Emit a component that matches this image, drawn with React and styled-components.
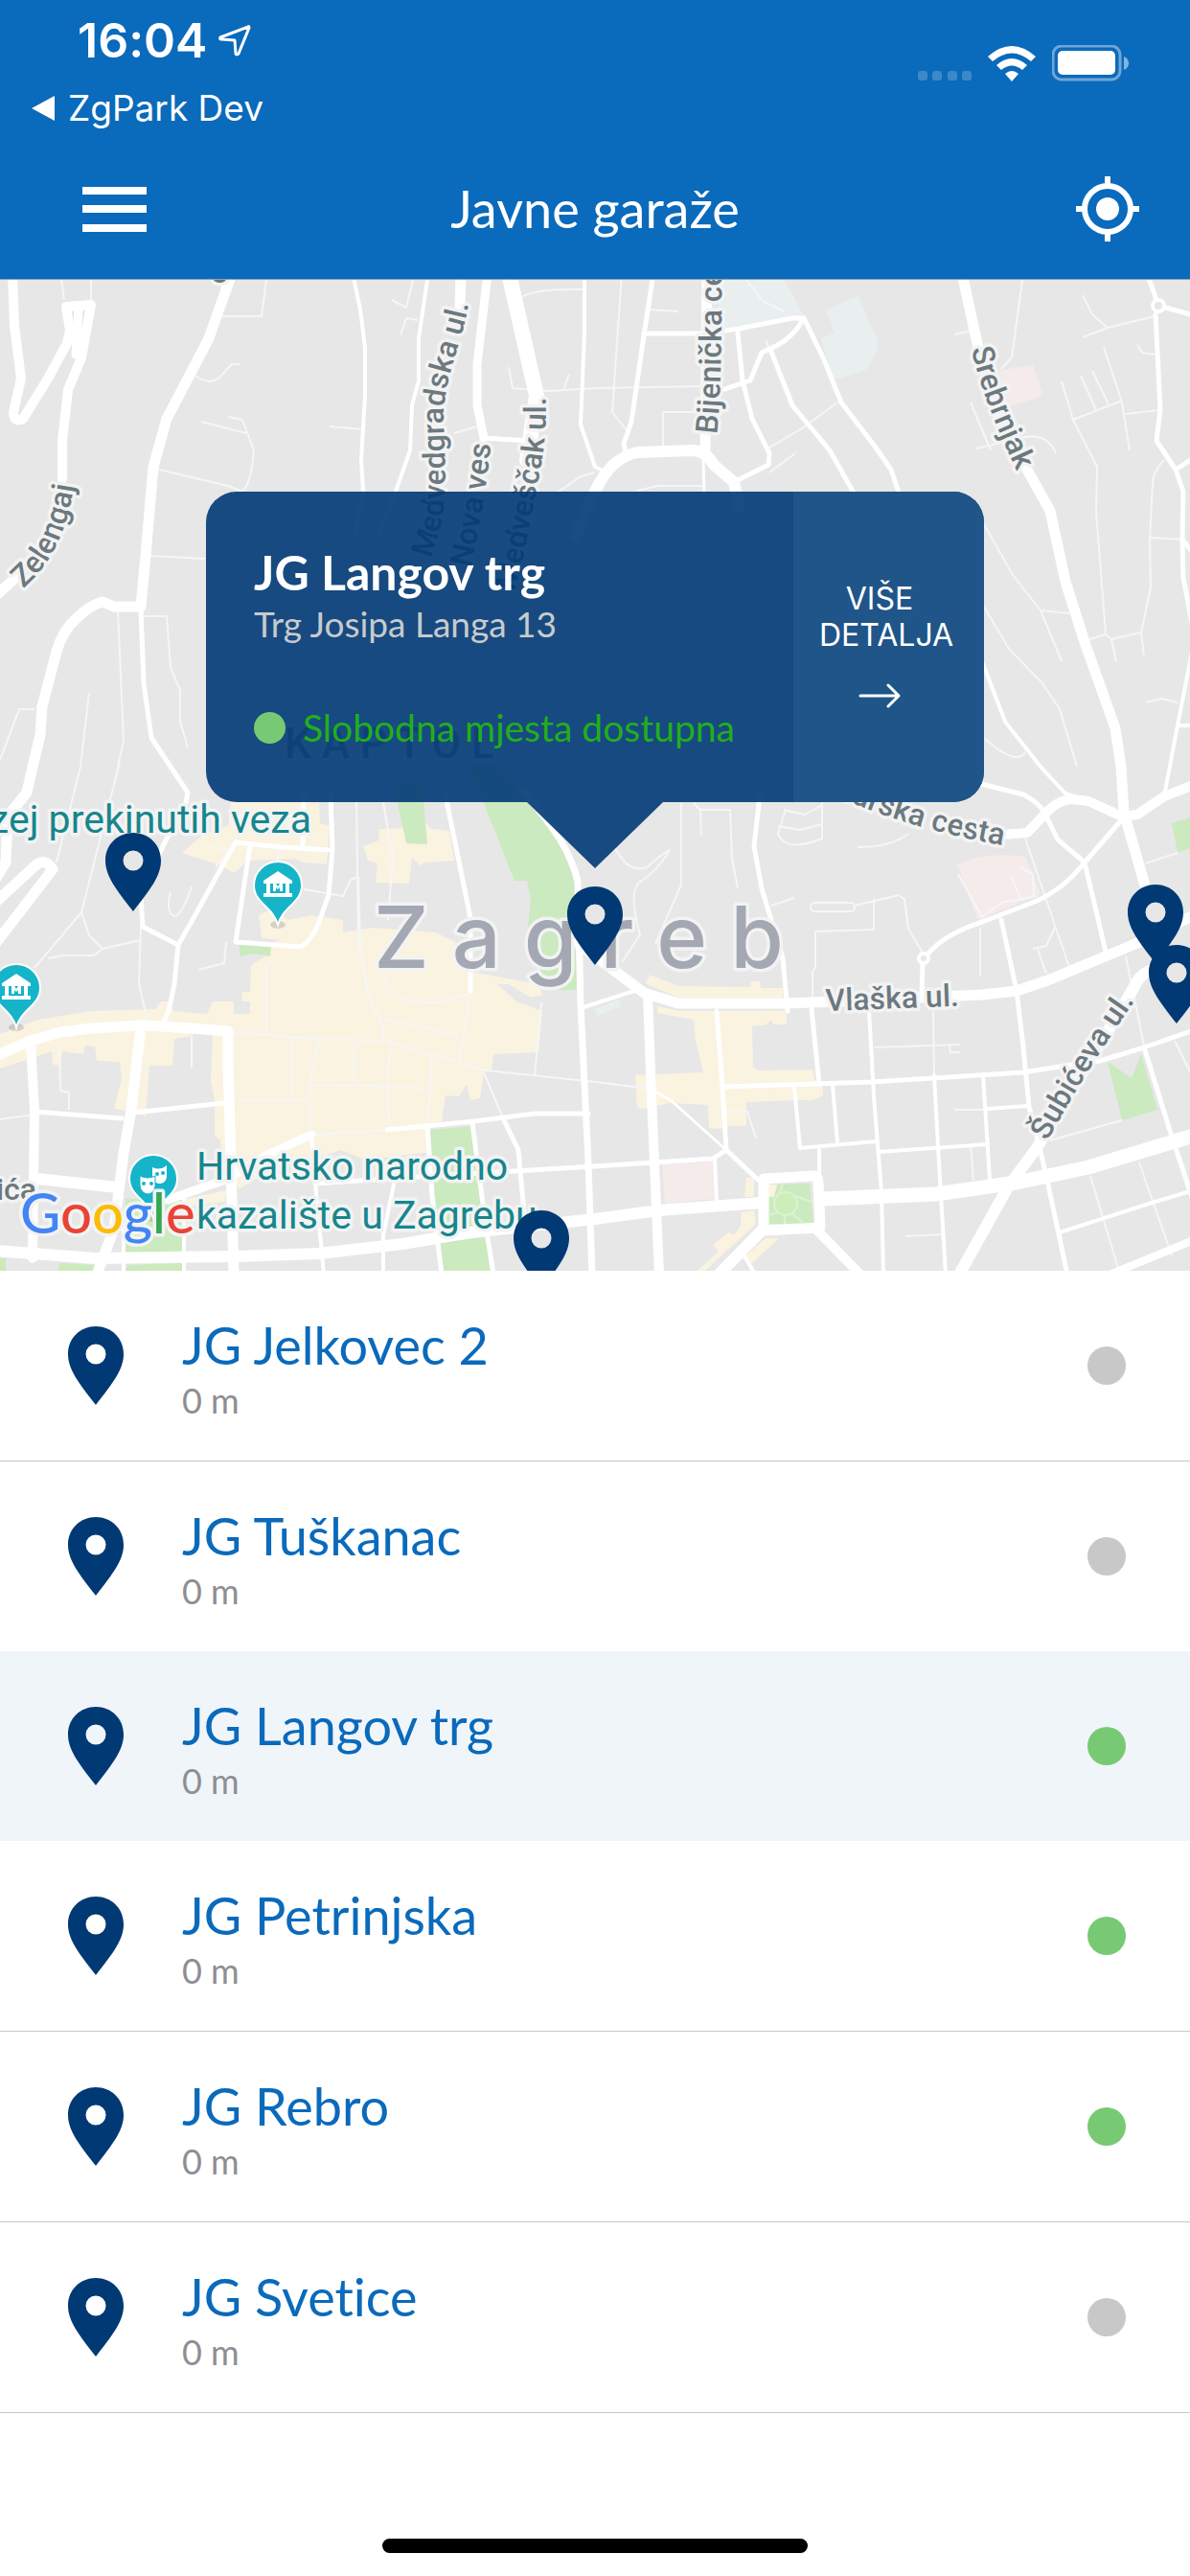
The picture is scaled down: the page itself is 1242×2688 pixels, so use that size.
import React, { useState } from 'react'
import styled, { createGlobalStyle } from 'styled-components'

const GlobalStyle = createGlobalStyle`
  *{
    box-sizing:border-box;
  }
  body{
    margin:0;
    background:#fff;
    font-family:Lato, "Open Sans", sans-serif;
    font-variant-ligatures:none;
  }
  button{
    padding:0;
    border:0;
    background:none;
    color:inherit;
    font:inherit;
    cursor:pointer;
  }
  svg{
    display:block;
  }
`

const Page = styled.div`
  display:flex;
  flex-direction:column;
  height:100vh;
  overflow:hidden;
`

const Header = styled.header`
  flex:none;
  background:#0a6abb;
  color:white;
  border-bottom:1px solid #8aa3b8;
`

const StatusBar = styled.div`
  display:flex;
  justify-content:space-between;
  align-items:flex-start;
  padding:12px 63px 10px 33px;
  font-family:Inter, "Liberation Sans", sans-serif;
`

const Clock = styled.div`
  display:flex;
  align-items:center;
  gap:12px;
  padding-left:48px;
  font-size:50px;
  font-weight:600;
  line-height:60px;
`

const BackLink = styled.a`
  display:flex;
  align-items:center;
  gap:14px;
  margin-top:19px;
  color:white;
  font-size:37px;
  line-height:44px;
  text-decoration:none;
`

const Indicators = styled.div`
  display:flex;
  align-items:flex-end;
  gap:17px;
  padding-top:35px;
`

const NavBar = styled.div`
  display:grid;
  grid-template-columns:1fr auto 1fr;
  align-items:center;
  height:146px;
`

const MenuButton = styled.button`
  && {
    justify-self:start;
    margin-left:86px;
  }
`

const LocateButton = styled.button`
  && {
    justify-self:end;
    margin-right:52px;
  }
`

const Title = styled.h1`
  margin:0;
  font-size:54px;
  font-weight:400;
  line-height:64px;
`

const MapArea = styled.section`
  position:relative;
  flex:none;
  height:1034px;
  overflow:hidden;
  background:#e7e7e7;
`

const MapSvg = styled.svg`
  width:100%;
  height:100%;
  .road{
    fill:none;
    stroke:white;
    stroke-linejoin:round;
    stroke-linecap:round;
  }
  .lane{
    fill:none;
    stroke:#f6f6f6;
    stroke-width:2;
    stroke-linejoin:round;
  }
  .shop{
    fill:#faf3e0;
  }
  .park{
    fill:#cbeabf;
  }
  .clinic{
    fill:#f5ebeb;
  }
  .campus{
    fill:#e9eeef;
  }
  text{
    font-family:Roboto, "Liberation Sans", sans-serif;
    paint-order:stroke;
    stroke:#f3f3f3;
    stroke-width:7px;
    stroke-linejoin:round;
  }
  .street{
    font-size:32px;
    font-weight:500;
    fill:#6c797f;
  }
  .place{
    font-size:41px;
    fill:#17868d;
  }
  .district{
    font-size:44px;
    font-weight:500;
    fill:#8d929c;
  }
  .city{
    font-family:Inter, Roboto, sans-serif;
    font-size:90px;
    font-weight:500;
    fill:#a3a8b3;
  }
  .google{
    font-family:Lato, sans-serif;
    font-size:58px;
    font-weight:500;
  }
`

// pins hang off the horizontal centre so that they stay on the drawn streets
const MapPin = styled.button`
  position:absolute;
  top:${(p) => p.$y}px;
  left:calc(50% + ${(p) => p.$x}px);
`

const Popup = styled.article`
  position:absolute;
  top:221px;
  left:50%;
  display:flex;
  width:812px;
  height:324px;
  transform:translateX(-50%);
  border-radius:32px;
  background:rgba(0, 57, 116, 0.9);
  color:white;
  &::after{
    content:"";
    position:absolute;
    top:100%;
    left:50%;
    width:142px;
    height:69px;
    transform:translateX(-50%);
    background:rgba(0, 57, 116, 0.9);
    clip-path:polygon(0 0, 100% 0, 50% 100%);
  }
`

const PopupBody = styled.div`
  flex:1;
  padding:56px 0 0 50px;
  h2{
    margin:0;
    font-size:50px;
    font-weight:700;
    line-height:56px;
  }
  p{
    margin:0;
    color:#c8cacc;
    font-size:37px;
    line-height:52px;
  }
`

const Availability = styled.div`
  display:flex;
  align-items:center;
  gap:18px;
  margin-top:56px;
  color:#22ae1c;
  font-size:39px;
  line-height:52px;
  white-space:nowrap;
`

const Dot = styled.span`
  flex:none;
  width:${(p) => p.$size}px;
  height:${(p) => p.$size}px;
  border-radius:50%;
  background:${(p) => (p.$free ? '#78c974' : '#c8c8c8')};
`

const DetailsButton = styled.button`
  && {
    display:flex;
    flex-direction:column;
    align-items:center;
    justify-content:center;
    gap:31px;
    width:199px;
    padding:0 46px 6px 27px;
    border-radius:0 32px 32px 0;
    background:#1f5588;
    font-family:Inter, "Liberation Sans", sans-serif;
    font-size:32px;
    font-weight:400;
    line-height:38px;
    span{
      width:100%;
    }
  }
`

const List = styled.ul`
  flex:1 1 0;
  min-height:0;
  margin:0;
  padding:0;
  overflow:hidden;
  list-style:none;
`

const Row = styled.li`
  border-bottom:${(p) => (p.$line ? '1px solid #c6c7c9' : '0')};
  background:${(p) => (p.$active ? '#f0f5fa' : 'white')};
  button{
    display:flex;
    align-items:center;
    width:100%;
    height:198px;
    padding:0 67px 0 70px;
    text-align:left;
  }
`

const RowText = styled.span`
  flex:1;
  display:flex;
  flex-direction:column;
  padding:4px 0 0 60px;
`

const Name = styled.span`
  color:#0a6abb;
  font-size:54px;
  line-height:68px;
`

const Distance = styled.span`
  color:#8e8e93;
  font-size:36px;
  line-height:46px;
`

const HomeArea = styled.footer`
  flex:none;
  display:flex;
  justify-content:center;
  padding:74px 0 24px;
  background:white;
  span{
    width:444px;
    height:15px;
    border-radius:8px;
    background:black;
  }
`

const garages = [
  { name: 'JG Jelkovec 2', free: false },
  { name: 'JG Tuškanac', free: false },
  { name: 'JG Langov trg', free: true },
  { name: 'JG Petrinjska', free: true },
  { name: 'JG Rebro', free: true },
  { name: 'JG Svetice', free: false },
  { name: 'JG Botinec', free: false },
]

const pins = [
  { x: -512, y: 577, label: 'JG Tuškanac' },
  { x: -30, y: 633, label: 'JG Langov trg' },
  { x: 555, y: 631, label: 'JG Rebro' },
  { x: 577, y: 694, label: 'JG Svetice' },
  { x: -86, y: 971, label: 'JG Petrinjska' },
]

const roads = [
  [10, 'M13 285L15 340L22 395L14 430Q14 442 24 437L50 395L70 358L73 345L69 320L95 318L85 373L71 407L65 460L65 500'],
  [9, 'M82 322L79 370'],
  [11, 'M22 598L-5 622'],
  [11, 'M242 285L218 353L174 437L160 487L152 580L147 633L119 633L107 628Q93 632 80 645Q65 658 59 680L44 737L42 767L34 800L28 827L8 852L6 900L-5 918'],
  [11, 'M-5 942L36 904Q46 894 55 907L-5 985'],
  [5, 'M147 637L150 713L158 770L178 800L196 827L194 838L170 883L147 936L149 967L186 986'],
  [5, 'M246 879L234 900L202 958L186 986L182 1027L176 1055L170 1068'],
  [4, 'M368 285L376 323L381 363L381 413L377 480L379 513L370 560'],
  [4, 'M447 285L437 353L437 397L430 423L428 470L414 510L395 560'],
  [11, 'M481 285L480 320'],
  [9, 'M509 285L498 380L498 423L505 457'],
  [16, 'M531 285L560 413L550 480'],
  [5, 'M505 457L554 460'],
  [4, 'M610 285L610 347L606 443L621 487L633 493'],
  [11, 'M-5 1102L32 1086L63 1077L95 1073L147 1070L170 1071L238 1076L238 1110L240 1179L244 1330'],
  [10, 'M32 1089L36 1158L34 1313'],
  [11, 'M147 1072L137 1158L129 1203L123 1251L119 1282L101 1330'],
  [5, 'M36 1160L127 1167'],
  [5, 'M139 1161L234 1151'],
  [12, 'M38 1230L123 1239'],
  [12, 'M-5 1305L99 1313L246 1311L333 1308L420 1298L491 1286L621 1272L688 1263L795 1255'],
  [9, 'M175 1252L238 1230L277 1206L325 1184'],
  [4, 'M325 1184L329 1234L338 1330'],
  [4, 'M192 1250L192 1330'],
  [4, 'M129 1280L129 1330'],
  [5, 'M404 1179L495 1170L558 1162L614 1162'],
  [5, 'M446 1175L451 1248L461 1330'],
  [5, 'M493 1172L507 1279L515 1330'],
  [5, 'M525 1167L541 1200L547 1265'],
  [5, 'M329 1235L451 1227L621 1217L744 1209L758 1200'],
  [4, 'M412 1231L400 1289L400 1330'],
  [5, 'M465 830L491 958L491 1034'],
  [7, 'M545 825Q595 880 603 920L606 1048L614 1213L618 1330'],
  [5, 'M345 830L347 886L343 934L333 962Q324 984 313 988L246 983L261 881'],
  [5, 'M246 879L293 884L345 887'],
  [5, 'M317 830L316 883'],
  [5, 'M682 285L672 350L659 440L651 463L653 472'],
  [11, 'M738 285L736 472'],
  [12, 'M600 560L621 513Q637 478 665 472L724 470Q738 472 745 485L766 503L772 530'],
  [5, 'M672 348L736 348L771 343L827 332L839 332L859 373L878 420L914 467L930 490L940 520'],
  [5, 'M839 332Q828 352 810 361L795 368L783 397L736 413'],
  [5, 'M770 347L775 397L785 437L803 473L802 485L766 503'],
  [5, 'M805 367L827 423L866 470L892 516'],
  [3, 'M734 480L735 516'],
  [11, 'M1004 285L1021 363L1040 430L1072 490L1096 533L1112 607L1132 670L1164 760L1170 800L1173 848L1195 924'],
  [5, 'M1197 285L1207 313'],
  [5, 'M1213 320L1246 329'],
  [5, 'M1206 328L1211 427L1207 460L1227 490L1235 513L1234 563L1235 603L1246 660'],
  [5, 'M1227 490L1246 478'],
  [5, 'M1234 563L1246 578'],
  [4, 'M1025 690L1049 753L1086 800L1112 828L1136 836'],
  [4, 'M1246 670L1229 757L1215 831'],
  [4, 'M1229 757L1246 757'],
  [11, 'M600 982L672 1036L708 1047L819 1047L898 1044L1025 1038L1061 1034L1096 1022L1187 984L1246 955'],
  [10, 'M676 1038L680 1144L688 1330'],
  [4, 'M606 1052L668 1032'],
  [5, 'M793 830L787 883L795 927L817 1000L822 1055'],
  [5, 'M748 1055L754 1134L758 1200L791 1231'],
  [5, 'M754 1134L910 1129L1068 1119L1112 1112L1148 1107L1191 1094L1246 1075'],
  [5, 'M847 1053L855 1131'],
  [4, 'M907 1055L912 1144L920 1244L922 1330'],
  [4, 'M975 1122L979 1196L987 1330'],
  [4, 'M829 1134L835 1198L914 1191'],
  [4, 'M869 1132L874 1193'],
  [4, 'M916 1202L1031 1194'],
  [4, 'M1026 1122L1033 1231'],
  [4, 'M1031 1157L1072 1154'],
  [5, 'M1045 960L1061 1034L1068 1093L1074 1155L1084 1193L1092 1227L1114 1330'],
  [15, 'M859 1251L977 1246L1061 1234L1136 1218L1246 1185'],
  [11, 'M797 1230L849 1227Q854 1228 854 1234L856 1281L797 1284Z'],
  [12, 'M795 1284L750 1330'],
  [4, 'M774 1306L786 1326'],
  [10, 'M853 1284L898 1330'],
  [4, 'M855 1200L855 1227'],
  [4, 'M746 1210L748 1255'],
  [3, 'M684 1139L700 1148L758 1200'],
  [12, 'M1203 1012Q1190 1015 1183 1031L1166 1060L1082 1198L1053 1237L1001 1330'],
  [10, 'M1045 871L1072 869L1092 848Q1105 834 1120 834L1136 836L1171 852L1187 850L1215 831L1246 819'],
  [5, 'M1020 817L1068 829Q1085 838 1090 848L1104 876L1132 900L1154 993'],
  [5, 'M1171 855L1132 900Q1110 928 1080 941L1025 962Q985 975 968 996'],
  [5, 'M963 1004L962 1038'],
  [5, 'M1195 1096L1223 1186L1246 1255'],
  [4, 'M1106 1286L1199 1256L1246 1242'],
  [8, 'M1158 1330L1246 1294'],
]

const lanes = [
  'M214 583L157 580', 'M166 490L238 507L253 513Q262 505 265 470L253 438L238 435', 'M210 440L257 452',
  'M204 392Q218 402 228 395L242 380L251 380', 'M230 330L273 330L279 285', 'M63 285L67 313', 'M95 285L95 313',
  'M543 310Q560 302 594 302L608 302', 'M531 383L535 405L574 408L621 405', 'M588 408L594 390', 'M344 445L378 448',
  'M409 313L424 321L431 292', 'M418 350L424 332L436 334', 'M123 637L129 773L123 800', 'M474 452L498 445', 'M583 513L606 497L621 493',
  'M150 643L174 643L178 697L188 720L188 753L196 780', 'M93 723L84 800L59 900', 'M0 793L20 740L36 740',
  'M125 795L85 952L36 1010', 'M85 952L93 976L107 990L147 981', 'M147 967L145 1027L154 1065', 'M50 1000L66 997L98 997L107 990',
  'M374 914L376 989L384 1038L400 1072L400 1086', 'M242 1077L329 1084L404 1086L507 1117L621 1129', 'M305 1082L305 1148',
  'M333 1084L323 1134L323 1182', 'M370 1086L370 1132', 'M323 1132L404 1133L449 1136', 'M408 1086L404 1134L407 1179',
  'M451 1100L447 1172', 'M242 1148L323 1148', 'M400 1063L481 1081', 'M491 1038L479 1107', 'M505 1119L525 1167', 'M325 1184L404 1179',
  'M491 1036Q455 1052 420 1043Q400 1030 396 1008', 'M278 1080L278 1006L288 1003', 'M565 1046L558 1123', 'M200 1080L200 1114',
  'M178 930Q172 955 184 956Q192 950 200 925', 'M207 1012L234 1005L236 983', 'M372 830L374 990', 'M400 837L410 895L405 960', 'M0 1168L36 1163', 'M62 1090L63 1138L72 1140L72 1158',
  'M317 928L358 935L366 918L374 915', 'M219 883L238 888L225 905', 'M290 884L290 925',
  'M803 467L837 447L874 420', 'M692 468L692 430L736 430', 'M621 405L736 403', 'M649 285L639 430L655 450', 'M665 512L686 507L734 507',
  'M678 323L708 325', 'M799 355L805 370', 'M803 493L830 473', 'M779 292L796 314L818 325',
  'M1068 285L1056 373L1045 385', 'M1130 308L1140 328L1156 342L1205 330', 'M1130 352L1156 342', 'M1013 420L1034 470',
  'M1108 398L1120 438L1145 487L1144 533L1154 662L1134 668', 'M1120 438L1171 418', 'M1152 362L1171 420L1179 470', 'M1175 432L1209 428',
  'M1215 480Q1203 492 1203 505L1200 563L1201 613L1191 660L1160 667L1154 662', 'M1200 561L1234 563', 'M1191 660L1194 684', 'M1160 667L1165 690',
  'M1128 392L1144 428', 'M1140 387L1157 422', 'M1187 360L1192 368L1206 370', 'M1027 547L1057 600L1086 637L1116 640', 'M1086 637L1108 690',
  'M1027 633L1053 677L1088 713L1106 740L1124 800', 'M1019 468L1065 457Q1092 450 1102 473', 'M997 349L1013 345', 'M1027 770Q1060 800 1070 785', 'M1196 733L1213 729L1229 733',
  'M912 938L912 970L851 972L851 1010L848 1014L848 1041', 'M892 945L938 934L944 938L948 969L964 996', 'M850 942H888Q892 942 892 947Q892 951 888 951H850Q846 951 846 947Q846 942 850 942Z',
  'M730 845L762 845L764 896L770 927', 'M724 838L731 845L732 872', 'M711 838L711 923L684 985', 'M641 883Q655 912 675 905Q705 880 697 890Q685 910 668 920Q655 930 668 975L650 1003',
  'M820 845L812 870Q820 890 858 875L858 837', 'M895 884Q930 884 948 870', 'M812 862L835 866L858 860', 'M818 845L840 850L858 840', 'M912 1093L1002 1090', 'M974 1055L975 1122', 'M1023 968L1023 1018',
  'M805 945L829 937', 'M1070 875L1118 1015', 'M1101 968L1092 987L1078 990', 'M1083 990L1092 1016', 'M1175 998L1195 1096', 'M1195 901L1229 890', 'M1096 1190L1171 1169', 'M1138 1227L1169 1330', 'M1189 1213L1223 1310',
  'M1013 1194L1016 1232', 'M945 1290L985 1288', 'M996 1158L1026 1158', 'M991 1090L992 1098L1002 1098', 'M758 1160L780 1160L789 1188', 'M1226 1086L1242 1118', 'M621 1129L678 1136', 'M1000 912L1025 957L1045 942L1082 935', 'M1055 915L1067 940', 'M1064 905L1078 912L1079 935',
]

const shops = [
  'M180 1055L216 1058L222 1045L244 1045L244 1058L261 1058L261 1045L252 1045L253 1035L261 1035L262 1007L277 998L283 984L291 981L273 979L270 955L285 948L300 960L325 955L358 960L358 973L388 968L455 973L475 983L491 1014L562 1027L566 1038L554 1041L531 1027L519 1027L539 1045L566 1055L562 1098L515 1100L513 1117L505 1118L501 1146L491 1148L487 1131L479 1144L465 1143L461 1170L448 1174L442 1203L380 1210L356 1200L325 1210L277 1224L249 1241L242 1224L234 1227L230 1190L224 1185L224 1148L220 1128L222 1079L182 1076Z',
  'M0 1079L40 1064L95 1055L162 1053L168 1045L177 1045L182 1058L200 1081L182 1084L180 1112L156 1112L152 1165L140 1160L119 1157L127 1126L125 1108L101 1107L99 1092L89 1091L87 1100L65 1097L63 1111L55 1111L54 1097L0 1115Z',
  'M190 890L214 869L238 862L241 837L333 837L334 859L344 862L341 902L317 900L309 896L259 898L244 911L230 903Z',
  'M379 883L395 877L396 865L424 864L446 860L450 865L469 867L474 898L444 900L438 903L430 895L427 922L392 921L394 901L384 898Z',
  'M404 1180L446 1175L446 1203L404 1203Z',
  'M186 1253L240 1241L234 1254L202 1258Z',
  'M678 1017L708 1029L783 1030L783 1024L793 1024L794 1031L817 1031L817 1041L708 1041L674 1026Z',
  'M686 1050L710 1055L821 1055L821 1069L807 1069L805 1064L800 1069L785 1071L786 1113L792 1117L849 1116L850 1127L859 1134L859 1143L849 1148L831 1148L779 1150L779 1175L760 1175L752 1178L740 1177L739 1153L698 1151L672 1157L665 1156L663 1122L734 1119L726 1086L724 1064L686 1057Z',
  'M779 1229L787 1229L787 1249L777 1249Z',
  'M773 1265L787 1263L789 1277L736 1326L728 1326L750 1306L744 1299L760 1286L766 1289L773 1279Z',
  'M813 1292L783 1320L775 1313L799 1292Z',
]

const parks = [
  'M410 815L440 815L446 881L424 880Z',
  'M490 800L520 800L550 836L586 883L602 927L594 945L606 1033L566 1033L564 1010L549 988L554 938L550 919L537 919Z',
  'M250 986L283 988L282 998L265 995L250 998Z',
  'M449 1179L493 1175L507 1282L457 1287Z',
  'M459 1296L509 1291L513 1326L463 1326Z',
  'M131 1251L190 1251L190 1306L131 1308Z',
  'M133 1320L190 1318L190 1326L131 1326Z',
  'M61 1318L101 1320L99 1326L61 1326Z',
  'M0 1313L6 1313L6 1326L0 1326Z',
  'M801 1236L845 1235L849 1277L801 1277Z',
  'M1156 1108L1181 1125L1191 1100L1208 1158L1171 1169Z',
  'M1223 859L1242 853L1242 886L1229 889Z',
]

const clinics = [
  'M1040 387L1078 381L1088 410L1084 415L1053 424Z',
  'M999 902Q1029 888 1070 894L1086 933L1021 960Z',
  'M691 1215L744 1212L746 1251L694 1256Z',
]

const streets = [
  { id: 'zelengaj', d: 'M24 614Q72 574 79 490', text: 'Zelengaj' },
  { id: 'medvedgradska', d: 'M449 583C472 530 463 480 463 430C466 385 486 350 492 300', text: 'Medvedgradska ul.' },
  { id: 'novaves', d: 'M491 592Q506 530 515 440', text: 'Nova ves' },
  { id: 'medvescak', d: 'M537 617Q550 570 560 510Q574 450 568 390', text: 'Medveščak ul.' },
  { id: 'bijenicka', d: 'M748 453Q755 400 753 200', text: 'Bijenička cesta' },
  { id: 'srebrnjak', d: 'M1014 364Q1024 415 1070 510', text: 'Srebrnjak' },
  { id: 'vocarska', d: 'M840 815Q930 862 1047 882', text: 'Voćarska cesta', end: true },
  { id: 'vlaska', d: 'M862 1055L1020 1049', text: 'Vlaška ul.' },
  { id: 'subiceva', d: 'M1093 1191Q1140 1105 1195 1030', text: 'Šubićeva ul.' },
]

function PinIcon() {
  return (
    <svg width="60" height="82" viewBox="0 0 60 82" aria-hidden="true">
      <path
        fill="#003974"
        fillRule="evenodd"
        d="M30 0C14 0 1 12 1 29C1 45 12 59 30 82C48 59 59 45 59 29C59 12 46 0 30 0ZM30 18.500A10.500 10.500 0 1 1 30 39.500A10.500 10.500 0 1 1 30 18.500Z"
      />
    </svg>
  )
}

function Poi({ x, y, children }) {
  return (
    <g transform={`translate(${x} ${y})`}>
      <ellipse cx="0" cy="41" rx="8" ry="4" fill="#00000022" />
      <path d="M0 -25C-14 -25 -25 -14 -25 0C-25 18 -5 22 0 41C5 22 25 18 25 0C25 -14 14 -25 0 -25Z" fill="#16b4c8" stroke="white" strokeWidth="2" />
      {children}
    </g>
  )
}

function Museum() {
  return (
    <g fill="white">
      <path d="M0 -15L15 -5V-2H-15V-5Z" />
      <path d="M-12 -3H-8V8H-12ZM8 -3H12V8H8ZM-15 8H15V12H-15Z" />
      <path d="M-5 6V-2H-2L0 1L2 -2H5V6H2V2L0 4L-2 2V6Z" />
    </g>
  )
}

function Masks() {
  return (
    <g>
      <path d="M-1 -12Q7 -8 14 -14V-2Q13 5 7 5Q1 5 -1 -1Z" fill="white" />
      <path d="M-14 -3Q-6 1 2 -3V8Q0 16 -6 16Q-13 15 -14 7Z" fill="white" stroke="#16b4c8" strokeWidth="1" />
      <circle cx="-10" cy="5" r="2" fill="#16b4c8" />
      <circle cx="-2" cy="5" r="2" fill="#16b4c8" />
      <circle cx="4" cy="-5" r="2" fill="#16b4c8" />
      <circle cx="10" cy="-6" r="2" fill="#16b4c8" />
    </g>
  )
}

function CityMap() {
  return (
    <MapSvg viewBox="0 292 1242 1034" preserveAspectRatio="xMidYMid slice" role="img" aria-label="Zagreb">
      <path className="campus" d="M752 285L815 285L839 330L771 343L748 343Z" />
      <path className="campus" d="M862 323L896 309L916 355Q916 375 902 387L870 397L857 353L871 347Z" />
      <path className="campus" d="M621 1053L645 1043L648 1050L623 1060Z" />
      {shops.map((d) => <path key={d} className="shop" d={d} />)}
      {parks.map((d) => <path key={d} className="park" d={d} />)}
      {clinics.map((d) => <path key={d} className="clinic" d={d} />)}
      <path className="shop" d="M801 1236L811 1236L808 1249L801 1249Z" />
      {lanes.map((d) => <path key={d} className="lane" d={d} />)}
      {roads.map(([width, d]) => <path key={d} className="road" strokeWidth={width} d={d} />)}
      <circle cx="1209" cy="319" r="6" fill="#e7e7e7" stroke="white" strokeWidth="4" />
      <circle cx="964" cy="1000" r="5" fill="#e7e7e7" stroke="white" strokeWidth="4" />
      <circle cx="820" cy="1256" r="12" fill="#cdedb9" stroke="#dcf2d2" strokeWidth="2" />
      <path d="M830 1248L846 1254M813 1246L817 1236M812 1265L802 1268M819 1268L819 1277M826 1266L840 1277" stroke="#dcf2d2" strokeWidth="2" />

      {streets.map((s) => (
        <g key={s.id}>
          <path id={s.id} d={s.d} fill="none" />
          <text className="street" textAnchor={s.end ? 'end' : 'start'}>
            <textPath href={`#${s.id}`} startOffset={s.end ? '100%' : '0'}>{s.text}</textPath>
          </text>
        </g>
      ))}
      <text className="street" x="38" y="1252" textAnchor="end">Kačića</text>
      <text className="street" x="239" y="289" textAnchor="end">g</text>
      <text className="district" x="297" y="791">K A P T O L</text>
      <text className="city" x="390" y="1010">Z a g r e b</text>

      <Poi x={290} y={924}><Museum /></Poi>
      <Poi x={17} y={1031}><Museum /></Poi>
      <Poi x={160} y={1230}><Masks /></Poi>
      <text className="place" x="325" y="869" textAnchor="end">Muzej prekinutih veza</text>
      <text className="place" x="205" y="1231">Hrvatsko narodno</text>
      <text className="place" x="205" y="1282">kazalište u Zagrebu</text>
      <text className="google" x="21" y="1287">
        <tspan fill="#4285f4">G</tspan>
        <tspan fill="#ea4335">o</tspan>
        <tspan fill="#fbbc05">o</tspan>
        <tspan fill="#4285f4">g</tspan>
        <tspan fill="#34a853">l</tspan>
        <tspan fill="#ea4335">e</tspan>
      </text>
    </MapSvg>
  )
}

function App() {
  const [active, setActive] = useState('JG Langov trg')
  const activeIndex = garages.findIndex((g) => g.name === active)

  return (
    <Page>
      <GlobalStyle />
      <Header>
        <StatusBar>
          <div>
            <Clock>
              16:04
              <svg width="34" height="34" viewBox="0 0 34 34" aria-hidden="true">
                <path d="M31 3L2 14Q1 16 3 16L17 17L18 31Q19 33 21 31L32 4Q32 2 31 3Z" fill="none" stroke="white" strokeWidth="3" strokeLinejoin="round" />
              </svg>
            </Clock>
            <BackLink href="#back">
              <svg width="24" height="26" viewBox="0 0 24 26" aria-hidden="true">
                <path d="M0 13L24 0V26Z" fill="white" />
              </svg>
              ZgPark Dev
            </BackLink>
          </div>
          <Indicators>
            <svg width="56" height="11" viewBox="0 0 56 11" fill="#3d88c9" aria-hidden="true">
              <rect width="10" height="10" rx="3" />
              <rect x="15" width="10" height="10" rx="3" />
              <rect x="31" width="10" height="10" rx="3" />
              <rect x="46" width="10" height="10" rx="3" />
            </svg>
            <svg width="50" height="37" viewBox="0 0 50 37" fill="white" aria-hidden="true">
              <path d="M0 11Q25 -11 50 11L45 16Q25 -1 5 16Z" />
              <path d="M9 20Q25 6 41 20L36 25Q25 16 14 25Z" />
              <path d="M18 29Q25 23 32 29L25 37Z" />
            </svg>
            <svg width="81" height="38" viewBox="0 0 81 38" aria-hidden="true">
              <rect x="1" y="1" width="70" height="35" rx="9" fill="none" stroke="#6ea6d6" strokeWidth="3" />
              <rect x="6" y="6" width="60" height="25" rx="5" fill="white" />
              <path d="M75 12Q80 14 80 19Q80 24 75 26Z" fill="#84b4dd" />
            </svg>
          </Indicators>
        </StatusBar>
        <NavBar>
          <MenuButton aria-label="Izbornik">
            <svg width="67" height="47" viewBox="0 0 67 47" fill="white">
              <rect width="67" height="8" />
              <rect y="19" width="67" height="8" />
              <rect y="39" width="67" height="8" />
            </svg>
          </MenuButton>
          <Title>Javne garaže</Title>
          <LocateButton aria-label="Moja lokacija">
            <svg width="68" height="68" viewBox="0 0 68 68">
              <circle cx="34" cy="34" r="24" fill="none" stroke="white" strokeWidth="6" />
              <circle cx="34" cy="34" r="12" fill="white" />
              <path d="M34 0V9M34 59V68M1 34H9M59 34H67" stroke="white" strokeWidth="6" />
            </svg>
          </LocateButton>
        </NavBar>
      </Header>

      <MapArea>
        <CityMap />
        {pins.map((p) => (
          <MapPin key={p.label} $x={p.x} $y={p.y} aria-label={p.label} onClick={() => setActive(p.label)}>
            <PinIcon />
          </MapPin>
        ))}
        <Popup>
          <PopupBody>
            <h2>JG Langov trg</h2>
            <p>Trg Josipa Langa 13</p>
            <Availability>
              <Dot $size={33} $free />
              Slobodna mjesta dostupna
            </Availability>
          </PopupBody>
          <DetailsButton>
            <span>VIŠE<br />DETALJA</span>
            <svg width="44" height="26" viewBox="0 0 44 26" fill="none" stroke="white" strokeWidth="3" strokeLinecap="round" strokeLinejoin="round">
              <path d="M2 13H42M31 2L42 13L31 24" />
            </svg>
          </DetailsButton>
        </Popup>
      </MapArea>

      <List>
        {garages.map((g, i) => (
          <Row key={g.name} $active={i === activeIndex} $line={i !== activeIndex && i !== activeIndex - 1}>
            <button onClick={() => setActive(g.name)}>
              <PinIcon />
              <RowText>
                <Name>{g.name}</Name>
                <Distance>0 m</Distance>
              </RowText>
              <Dot $size={40} $free={g.free} />
            </button>
          </Row>
        ))}
      </List>
      <HomeArea><span /></HomeArea>
    </Page>
  )
}

export default App
